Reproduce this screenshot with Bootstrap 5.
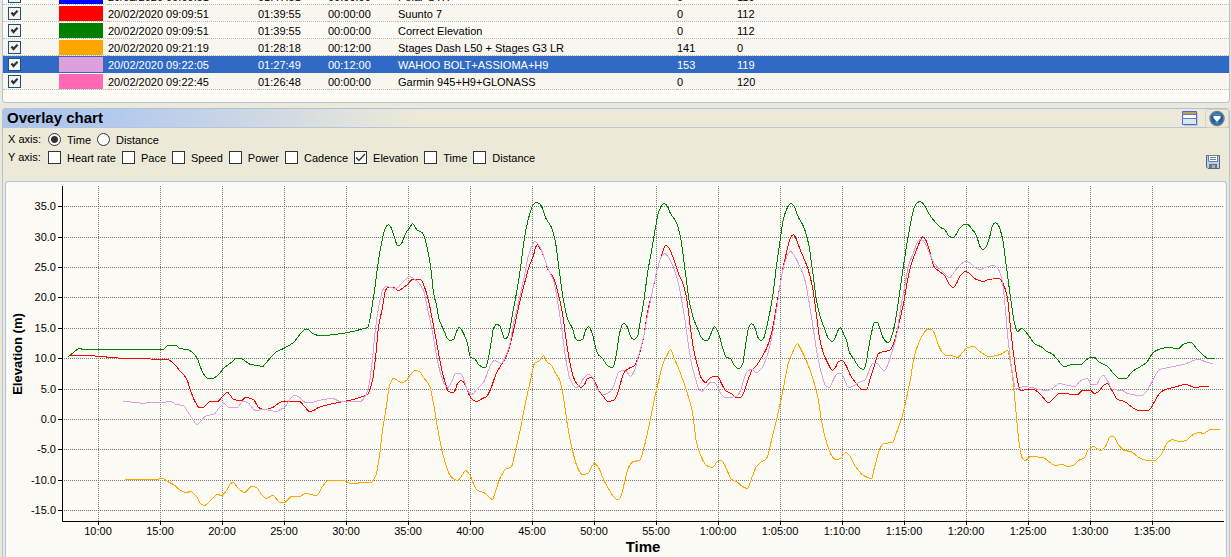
<!DOCTYPE html>
<html lang="en">
<head>
<meta charset="utf-8">
<meta name="viewport" content="width=device-width, initial-scale=1">
<title>Overlay chart</title>
<link href="https://cdn.jsdelivr.net/npm/bootstrap@5.3.0/dist/css/bootstrap.min.css" rel="stylesheet">
<style>
:root{--edge:#afc3df;--paper:#fcfbf5;--face:#ece9d8}
body{background:var(--face);font:11px/13px "Liberation Sans",Arial,sans-serif;color:#000;overflow-x:hidden}
.tracks{height:103px;margin:0 1px 0 2px;border:1px solid var(--edge);border-top:0;border-radius:0 0 4px 4px;background:var(--paper);overflow:hidden;padding-bottom:12px}
.tracks table{width:100%;table-layout:fixed;border-collapse:separate;border-spacing:0;margin:0}
.tracks td{height:17px;padding:1px 0 0;line-height:15px;border-bottom:1px dotted #bcbab2;white-space:nowrap;vertical-align:top}
.tracks td.value{padding-top:2px;line-height:14px}
.tracks tr:nth-child(even) td{background:#f9f6ef}
.tracks tr.picked td{background:#316ac5;color:#fff;border-color:#316ac5}
.swatch{width:44px;height:15px}
.tick{appearance:none;display:block;width:13px;height:13px;margin:0;border:1px solid #333;background:#fff center/11px 11px no-repeat;flex:none}
.tick:checked{background-image:url("data:image/svg+xml,%3Csvg xmlns='http://www.w3.org/2000/svg' viewBox='0 0 11 11'%3E%3Cpath d='M1 5.5 4 8.5 10 2' fill='none' stroke='%23333' stroke-width='1.3'/%3E%3C/svg%3E")}
.tracks .tick{margin:1px 0 0 5px;border-color:#1c5180;background-color:#f4f3ee}
.tracks .tick:checked{background-image:url("data:image/svg+xml,%3Csvg xmlns='http://www.w3.org/2000/svg' viewBox='0 0 11 11'%3E%3Cpath d='M2.500 4.500 4.500 7 8.500 2.800' fill='none' stroke='%23392f2f' stroke-width='2.200'/%3E%3C/svg%3E")}
.round{appearance:none;display:block;width:13px;height:13px;margin:0;border:1px solid #333;border-radius:50%;background:#fff;flex:none}
.round:checked{background:radial-gradient(circle,#333 0 3px,#fff 4px)}
.overlay-panel{margin:5px 1px 0 2px;border:1px solid var(--edge);border-bottom:0;border-radius:4px 4px 0 0}
.panel-title{height:19px;border-bottom:1px solid #b6c5d9;background:linear-gradient(90deg,#adc5ec 0,#b3c9ee 110px,var(--face) 415px)}
.panel-title h1{font-size:15px;line-height:18px;font-weight:700;margin:0 0 0 4px}
.tool{border:0;padding:0;background:none;line-height:0}
.tool svg{display:block}
.split-tool{margin-right:7px}
.collapse-tool{border:1px solid #d6d3c0;border-radius:3px;width:24px;height:19px;padding:0 0 0 3px}
.axes{height:53px;padding:5px 9px 0 5px}
.axis-name{width:40px;line-height:13px}
.choice{gap:6px;margin-right:6px;line-height:13px}
.choice span{padding-top:1px}
.plot-box{margin:0 2px;border:1px solid var(--edge);border-bottom:0;border-radius:4px 4px 0 0;background:var(--paper)}
.plot-box svg{display:block;width:100%;height:auto}
.plot-box text{font-family:"Liberation Sans",Arial,sans-serif;font-size:11px}
.plot-box .axis-title{font-weight:700}
</style>
</head>
<body>
<section class="tracks d-flex flex-column justify-content-end" aria-label="Activities">
<table>
<colgroup><col style="width:56px"><col style="width:49px"><col style="width:150px"><col style="width:70px"><col style="width:70px"><col style="width:279px"><col style="width:60px"><col></colgroup>
<tbody id="rows"></tbody>
</table>
</section>
<section class="overlay-panel">
<header class="panel-title d-flex align-items-center">
<h1>Overlay chart</h1>
<button class="tool split-tool ms-auto" type="button" aria-label="Split view"><svg width="16" height="15" viewBox="0 0 16 15"><path d="M2 14.500H15.500V2" fill="none" stroke="#cbc9bd"/><path d="M.5.5H14.500V13.500H.5Z" fill="#fff" stroke="#5a5fd0"/><path d="M1 1H14V3H1Z" fill="#a9ae52"/><path d="M1 8H14V13H1Z" fill="#cdeeee"/><path d="M0 3.500H15M0 7.500H15" stroke="#6c70d8"/></svg></button>
<button class="tool collapse-tool" type="button" aria-label="Collapse"><svg width="16" height="17" viewBox="0 0 16 17"><circle cx="8" cy="8.500" r="7" fill="#235fa5" stroke="#72808c" stroke-width="1.500"/><path d="M3 5.500A6 5 0 0 1 13 5.500Z" fill="#4b88c4"/><path d="M5 12H11L8 14Z" fill="#2d9eac"/><path d="M4.500 6H11.500V8L8 12 4.500 8Z" fill="#fff"/></svg></button>
</header>
<div class="axes d-flex">
<div>
<div class="d-flex mb-1"><div class="axis-name">X axis:</div><div class="d-flex" id="xaxis"></div></div>
<div class="d-flex"><div class="axis-name">Y axis:</div><div class="d-flex" id="yaxis"></div></div>
</div>
<button class="tool ms-auto align-self-end mb-2 pb-1" type="button" aria-label="Save"><svg width="14" height="14" viewBox="0 0 14 14"><path d="M.5.5H13.500V13.500H2L.5 12Z" fill="#b9d0ea" stroke="#4d688f"/><path d="M2.500.5H11.500V6.500H2.500Z" fill="#fff" stroke="#6b7f9c"/><path d="M4 2.500H10M4 4.500H10" stroke="#6b7f9c"/><path d="M3 9H11V13H3Z" fill="#6a7180"/><path d="M6 10H9V13H6Z" fill="#a8adb6"/></svg></button>
</div>
<div class="plot-box"><svg id="plot" viewBox="6 182 1220 375" role="img" aria-label="Elevation over time"></svg></div>
</section>
<script src="https://cdn.jsdelivr.net/npm/bootstrap@5.3.0/dist/js/bootstrap.bundle.min.js"></script>
<script>
const tracks=[
["#0000ff","20/02/2020 09:09:51","01:47:51","00:00:00","Polar GTX","0","110"],
["#ff0000","20/02/2020 09:09:51","01:39:55","00:00:00","Suunto 7","0","112"],
["#008000","20/02/2020 09:09:51","01:39:55","00:00:00","Correct Elevation","0","112"],
["#ffa500","20/02/2020 09:21:19","01:28:18","00:12:00","Stages Dash L50 + Stages G3 LR","141","0"],
["#dda0dd","20/02/2020 09:22:05","01:27:49","00:12:00","WAHOO BOLT+ASSIOMA+H9","153","119"],
["#ff69b4","20/02/2020 09:22:45","01:26:48","00:00:00","Garmin 945+H9+GLONASS","0","120"]];
document.getElementById("rows").innerHTML=tracks.map((t,i)=>
`<tr class="${i===4?"picked":""}"><td><input class="tick" type="checkbox" aria-label="Show ${t[4]}" ${i?"checked":""}></td><td><div class="swatch" style="background:${t[0]}"></div></td>${t.slice(1).map(v=>`<td class="value">${v}</td>`).join("")}</tr>`).join("");
const choice=(type,cls,group,name,on)=>`<label class="choice d-flex"><input class="${cls}" type="${type}" name="${group}" ${on?"checked":""}><span>${name}</span></label>`;
document.getElementById("xaxis").innerHTML=["Time","Distance"].map(n=>choice("radio","round","x",n,n==="Time")).join("");
document.getElementById("yaxis").innerHTML=["Heart rate","Pace","Speed","Power","Cadence","Elevation","Time","Distance"].map(n=>choice("checkbox","tick","y",n,n==="Elevation")).join("");

const series={
"#ff0000":"68,356 70,355 83,355 125,358 167,359 173,363 180,371 186,378 190,390 195,402 199,407 202,407 207,403 210,401 217,401 222,396 227,392 230,395 233,399 241,400 245,397 253,399 258,407 264,409 272,407 282,401 299,401 304,406 309,411 313,410 318,407 367,394 372,380 375,357 378,327 382,307 385,290 387,287 393,287 398,290 403,287 407,284 412,279 420,279 423,284 428,300 432,320 437,347 441,368 445,383 448,391 452,392 454,391 457,383 461,380 464,383 468,393 472,399 476,401 482,398 486,396 490,389 495,375 499,367 503,361 508,350 513,330 518,307 524,283 529,265 533,255 535,247 537,244 539,247 543,255 548,270 553,277 557,290 562,313 565,335 569,360 573,377 577,384 581,387 584,384 587,378 591,377 595,382 598,390 603,396 607,401 613,400 616,396 620,383 623,373 628,368 634,365 638,356 643,337 647,312 652,290 657,268 662,252 665,245 668,247 673,258 678,273 682,282 686,297 690,328 693,348 697,365 701,378 705,382 709,378 713,376 717,376 721,383 725,390 732,394 736,397 740,397 744,390 748,378 752,369 756,365 761,357 766,348 771,333 775,312 780,282 783,265 787,248 790,237 793,234 795,237 800,250 807,267 812,287 816,315 819,337 823,353 828,364 832,370 835,367 838,361 842,360 846,366 850,375 855,382 862,389 866,389 870,377 874,365 878,353 883,351 889,350 893,343 898,325 903,303 907,280 911,263 915,252 919,242 922,236 925,239 929,250 934,267 939,271 944,275 949,284 953,287 956,283 960,275 965,271 969,273 974,278 983,281 988,279 999,278 1003,284 1007,298 1010,327 1013,353 1017,380 1020,390 1027,389 1033,389 1040,394 1048,402 1053,398 1059,393 1077,394 1082,390 1090,390 1094,393 1098,391 1103,385 1107,383 1111,389 1117,399 1124,401 1132,407 1138,410 1148,410 1153,403 1159,393 1165,389 1173,387 1185,384 1195,387 1203,386 1208,386",
"#008000":"68,356 73,352 79,348 83,349 163,349 167,345 176,345 179,348 187,349 192,352 197,358 200,367 205,376 208,378 212,378 217,375 223,368 232,361 235,358 240,358 250,364 257,365 262,366 265,363 275,352 283,348 293,342 297,337 305,329 308,329 311,332 318,335 367,327 373,297 378,260 382,238 385,227 388,224 391,228 394,237 397,245 399,245 402,241 405,233 410,226 412,223 417,230 420,231 423,234 427,249 430,265 433,292 436,305 439,320 443,329 447,338 450,340 453,339 457,329 459,327 463,333 467,343 470,357 474,358 478,364 483,367 485,367 488,357 491,340 493,328 496,324 499,325 502,333 504,338 507,337 509,330 513,308 517,287 521,260 524,237 527,222 531,208 533,204 536,202 539,203 542,208 545,217 551,227 555,242 559,272 563,300 567,318 572,328 575,338 578,340 582,339 585,330 588,326 592,334 594,342 597,353 602,358 607,365 611,367 613,366 616,353 619,333 622,324 624,323 627,327 630,336 633,339 637,336 639,325 643,303 647,273 652,245 655,227 658,212 662,204 664,203 667,206 670,213 676,222 680,237 685,273 689,302 693,318 697,328 701,337 704,340 707,340 711,332 714,326 718,333 722,347 726,357 730,358 734,365 738,368 742,364 745,345 748,328 751,323 754,326 757,336 760,340 763,338 767,323 772,297 776,265 780,237 783,218 787,207 790,203 793,205 798,217 803,226 808,243 812,270 816,300 820,317 824,328 828,338 832,341 834,339 837,331 840,327 842,331 846,340 849,352 853,358 859,367 863,369 865,365 868,348 872,328 874,322 877,322 879,327 883,338 887,342 889,341 894,325 899,293 903,265 907,240 911,218 914,206 917,202 920,201 924,205 929,214 935,222 940,227 944,229 949,236 952,237 954,236 959,228 964,224 967,224 971,228 976,235 979,245 982,249 985,247 989,237 992,225 995,222 998,225 1002,238 1006,267 1010,297 1014,323 1017,331 1021,328 1023,329 1028,335 1034,343 1042,347 1046,351 1051,353 1057,359 1062,365 1064,366 1072,364 1080,364 1085,360 1090,357 1094,357 1098,361 1107,366 1113,373 1119,378 1125,378 1132,371 1140,366 1146,362 1152,353 1158,349 1167,347 1178,348 1184,343 1190,342 1197,349 1203,355 1208,358 1214,358",
"#ffa500":"124,479 155,479 162,478 167,481 173,484 179,489 186,492 190,491 196,496 200,503 204,505 207,503 212,498 217,494 221,495 226,490 230,483 233,482 237,487 244,492 251,486 256,487 261,494 266,498 272,495 280,502 284,502 291,496 299,496 305,493 316,495 322,486 328,480 343,480 350,483 355,483 361,482 370,482 375,476 379,455 382,430 386,405 389,385 393,378 397,380 401,382 406,380 410,374 415,370 419,371 423,377 429,385 433,403 437,427 441,448 445,463 449,474 454,479 457,480 462,474 465,470 469,474 476,489 485,493 492,499 494,494 499,479 505,469 511,466 515,450 520,428 525,402 530,380 534,363 539,360 543,355 546,361 551,365 555,373 559,379 563,397 567,425 572,450 577,467 582,474 587,473 594,463 598,467 603,479 608,488 613,496 617,499 620,497 624,482 628,467 633,461 639,460 644,445 649,423 654,398 659,377 663,362 667,354 670,349 673,356 680,373 686,390 692,412 696,442 701,457 706,465 712,467 717,461 721,460 725,466 731,479 736,481 742,486 747,488 750,481 756,466 760,462 766,458 771,440 777,415 782,392 788,362 793,350 797,343 800,348 807,363 812,377 817,395 821,420 825,438 831,455 835,459 840,458 845,452 849,455 855,466 863,475 871,478 874,467 879,449 883,443 892,442 895,435 901,418 905,402 910,378 914,355 918,343 922,335 927,329 931,329 934,333 938,345 942,352 946,355 951,355 957,357 962,352 967,347 973,346 978,350 989,356 1000,354 1007,350 1010,362 1013,385 1016,417 1019,445 1022,458 1025,460 1030,456 1042,457 1051,463 1055,465 1062,464 1067,466 1073,465 1078,460 1084,457 1088,449 1093,446 1100,450 1105,446 1110,436 1113,436 1118,444 1124,450 1130,451 1140,458 1148,460 1154,460 1160,455 1167,442 1172,439 1178,441 1186,440 1191,435 1199,432 1203,433 1210,429 1219,429",
"#dda0dd":"123,401 137,402 143,403 148,402 162,402 170,401 176,404 183,405 187,411 193,420 196,424 200,421 206,415 213,414 219,407 224,403 228,407 237,407 242,401 247,402 255,410 264,409 276,411 280,409 284,407 289,399 294,395 298,396 305,402 311,402 318,400 332,398 340,401 360,401 364,397 368,387 372,358 375,328 379,302 383,288 386,286 395,288 400,284 405,279 409,276 413,278 418,282 423,290 427,308 432,332 436,355 440,373 444,384 447,387 451,382 455,373 460,373 463,378 467,390 471,394 477,388 483,382 487,372 491,363 494,360 501,363 504,358 509,345 513,323 518,302 524,275 528,255 532,244 534,241 537,243 542,252 547,267 553,280 557,300 561,327 565,357 569,377 573,385 576,387 580,383 584,377 588,374 592,377 596,387 600,393 603,394 610,391 614,383 618,372 622,370 626,371 630,376 634,370 638,355 643,337 647,315 652,290 657,268 661,256 664,253 668,257 673,267 678,283 683,310 691,363 695,378 698,388 701,391 706,386 710,382 714,382 718,388 721,394 725,397 736,396 740,390 744,377 748,370 751,369 756,372 761,368 766,357 771,338 776,310 780,282 784,263 788,253 790,251 793,254 798,263 804,278 808,298 812,323 817,355 821,373 825,385 829,387 833,379 837,373 841,373 844,379 848,387 854,385 858,382 864,380 868,372 872,363 877,363 880,367 884,370 887,365 892,350 896,335 900,308 904,287 908,265 913,252 918,240 921,239 924,242 930,255 934,263 942,271 949,277 954,271 960,264 965,261 969,262 974,267 980,269 985,267 993,265 998,269 1002,282 1005,310 1008,343 1012,373 1015,388 1018,388 1023,386 1032,387 1038,389 1047,390 1053,387 1059,383 1067,385 1075,386 1079,381 1087,378 1091,384 1096,384 1100,377 1103,375 1107,380 1112,389 1122,390 1127,393 1141,395 1146,391 1151,382 1156,373 1159,369 1168,367 1183,364 1198,359 1207,362 1213,363"};

// Cubic path through the samples; slopes are flat at local extremes, so peaks are not overshot.
function smooth(points){
  const p=points.split(" ").map(s=>s.split(",").map(Number));
  const s=p.slice(1).map((q,i)=>(q[1]-p[i][1])/(q[0]-p[i][0]));
  const m=p.map((q,i)=>{
    if(i===0||i===p.length-1)return s[i?i-1:0];
    return s[i-1]*s[i]<=0?0:2*s[i-1]*s[i]/(s[i-1]+s[i]);
  });
  let d=`M${p[0]}`;
  for(let i=1;i<p.length;i++){
    const h=(p[i][0]-p[i-1][0])/3;
    d+=`C${p[i-1][0]+h} ${p[i-1][1]+m[i-1]*h} ${p[i][0]-h} ${p[i][1]-m[i]*h} ${p[i]}`;
  }
  return d;
}

let out="";
const ys=[206,237,267,297,328,358,389,419,449,480,510];
ys.forEach((y,i)=>{
  out+=`<path d="M64 ${y}.5H1223" stroke="#777" stroke-dasharray="1 1"/><path d="M58 ${y}.5H62" stroke="#000"/><text x="56" y="${y+4}" text-anchor="end">${(35-5*i).toFixed(1)}</text>`;
});
for(let i=0;i<18;i++){
  const x=98+62*i,m=10+5*i;
  const label=m<60?`${m}:00`:`1:${String(m-60).padStart(2,"0")}:00`;
  out+=`<path d="M${x}.5 186V521" stroke="#777" stroke-dasharray="1 1"/><path d="M${x}.5 522V525" stroke="#000"/><text x="${x}" y="535" text-anchor="middle">${label}</text>`;
}
out+=`<path d="M62.500 186V521.500H1224" fill="none" stroke="#000"/>`;
for(const [colour,points] of Object.entries(series)){
  out+=`<path d="${smooth(points)}" transform="translate(.5 .5)" fill="none" stroke="${colour}" shape-rendering="crispEdges"/>`;
}
out+=`<text class="axis-title" x="643" y="552" text-anchor="middle" style="font-size:15px">Time</text><text class="axis-title" transform="translate(22 354) rotate(-90)" text-anchor="middle" style="font-size:13px">Elevation (m)</text>`;
document.getElementById("plot").innerHTML=out;
</script>
</body>
</html>
